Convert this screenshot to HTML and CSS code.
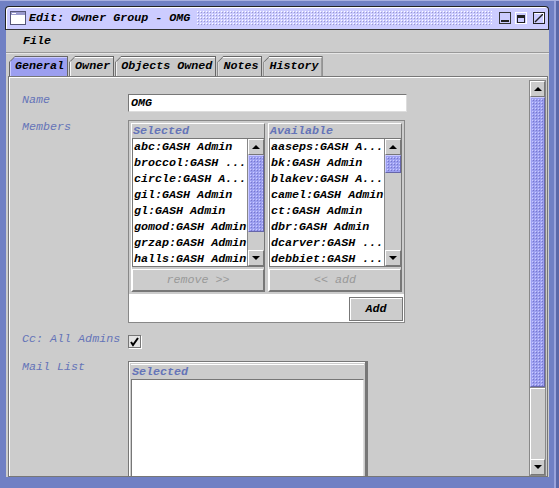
FILE: index.html
```html
<html>
<head>
  <title>Edit: Owner Group - OMG</title>
  <link rel="stylesheet" href="styles.css">
</head>
<body>
  <div class="window">
    <div class="titlebar">
      <span class="app-icon">
        <svg width="16" height="14" viewBox="0 0 16 14">
          <rect x="0.5" y="0.5" width="15" height="13" fill="#fff" stroke="#555577"/>
          <rect x="1" y="1" width="14" height="3" fill="#9999cc"/>
          <rect x="2" y="2" width="4" height="1" fill="#fff"/>
        </svg>
      </span>
      <span class="title">Edit: Owner Group - OMG</span>
      <span class="bumps"></span>
      <span class="tbtn">
        <svg width="12" height="12" viewBox="0 0 12 12">
          <rect x="0.5" y="0.5" width="11" height="11" fill="#ccccff" stroke="#fff"/>
          <rect x="0" y="0" width="11" height="11" fill="none" stroke="#333" stroke-width="1" transform="translate(0.5 0.5)"/>
          <rect x="2" y="8" width="8" height="2" fill="#222"/>
        </svg>
      </span>
      <span class="tbtn">
        <svg width="12" height="12" viewBox="0 0 12 12">
          <rect x="0.5" y="0.5" width="11" height="11" fill="#ccccff" stroke="#fff"/>
          <rect x="2.5" y="3.5" width="7" height="7" fill="#ccccff" stroke="#222"/>
          <rect x="3" y="4" width="6" height="2" fill="#222"/>
        </svg>
      </span>
      <span class="tbtn">
        <svg width="12" height="12" viewBox="0 0 12 12">
          <rect x="0.5" y="0.5" width="11" height="11" fill="#ccccff" stroke="#222"/>
          <path d="M2 10 L10 2" stroke="#222" stroke-width="1.5"/>
          <path d="M1.5 1.5 H10.5 V10.5" fill="none" stroke="#fff"/>
        </svg>
      </span>
    </div>

    <div class="frame-body">
      <div class="menubar"><span class="menu">File</span></div>

      <div class="tabs">
        <div class="tab selected"><span>General</span></div>
        <div class="tab"><span>Owner</span></div>
        <div class="tab"><span>Objects Owned</span></div>
        <div class="tab"><span>Notes</span></div>
        <div class="tab"><span>History</span></div>
      </div>

      <div class="panel">
        <div class="form">
          <div class="row row-name">
            <div class="lbl">Name</div>
            <div class="textfield">OMG</div>
          </div>

          <div class="row row-members">
            <div class="lbl">Members</div>
            <div class="members">
              <div class="cols">
                <div class="col">
                  <div class="col-head">Selected</div>
                  <div class="list">
                    <ul class="items">
                      <li>abc:GASH Admin</li>
                      <li>broccol:GASH ...</li>
                      <li>circle:GASH A...</li>
                      <li>gil:GASH Admin</li>
                      <li>gl:GASH Admin</li>
                      <li>gomod:GASH Admin</li>
                      <li>grzap:GASH Admin</li>
                      <li>halls:GASH Admin</li>
                    </ul>
                    <div class="sb">
                      <div class="sb-btn up"></div>
                      <div class="sb-thumb thumb-long"></div>
                      <div class="sb-track"></div>
                      <div class="sb-btn down"></div>
                    </div>
                  </div>
                  <div class="btn disabled">remove &gt;&gt;</div>
                </div>
                <div class="col">
                  <div class="col-head">Available</div>
                  <div class="list">
                    <ul class="items">
                      <li>aaseps:GASH A...</li>
                      <li>bk:GASH Admin</li>
                      <li>blakev:GASH A...</li>
                      <li>camel:GASH Admin</li>
                      <li>ct:GASH Admin</li>
                      <li>dbr:GASH Admin</li>
                      <li>dcarver:GASH ...</li>
                      <li>debbiet:GASH ...</li>
                    </ul>
                    <div class="sb">
                      <div class="sb-btn up"></div>
                      <div class="sb-thumb thumb-short"></div>
                      <div class="sb-track"></div>
                      <div class="sb-btn down"></div>
                    </div>
                  </div>
                  <div class="btn disabled">&lt;&lt; add</div>
                </div>
              </div>
              <div class="adder">
                <div class="btn add">Add</div>
              </div>
            </div>
          </div>

          <div class="row row-cc">
            <div class="lbl">Cc: All Admins</div>
            <div class="check">
              <svg width="11" height="11" viewBox="0 0 11 11">
                <path d="M2 6 L4 9 L9 2" fill="none" stroke="#000" stroke-width="2"/>
              </svg>
            </div>
          </div>

          <div class="row row-mail">
            <div class="lbl">Mail List</div>
            <div class="mail">
              <div class="col-head">Selected</div>
              <div class="mail-list"></div>
            </div>
          </div>
        </div>

        <div class="vscroll">
          <div class="sb-btn up"></div>
          <div class="sb-thumb main-thumb"></div>
          <div class="sb-track"></div>
          <div class="sb-btn down"></div>
        </div>
      </div>
    </div>
  </div>
</body>
</html>
```

FILE: styles.css
```css
body {
  margin: 0;
  font: italic 11.7px "Liberation Mono", "DejaVu Sans Mono", monospace;
  background: #7080c4;
}
.window {
  width: 559px;
  height: 488px;
  box-sizing: border-box;
  padding: 6px 10px 11px 5px;
  display: flex;
  flex-direction: column;
  background: #7080c4;
  box-shadow: inset 0 1px 0 #a8b0e0, inset -3px 0 0 #5a68a8, inset -5px 0 0 #9aa4dc;
}

/* title bar */
.titlebar {
  height: 24px;
  box-sizing: border-box;
  display: flex;
  align-items: center;
  background: #ccccff;
  border: 1px solid #222;
  border-bottom-color: #333;
  border-radius: 4px 4px 0 0;
  box-shadow: inset 1px 1px 0 #fff;
  padding: 0 3px 0 4px;
}
.app-icon {
  display: flex;
  margin-right: 3px;
}
.title {
  font-weight: bold;
  padding-right: 6px;
}
.bumps {
  flex: 1;
  align-self: stretch;
  margin: 3px 3px 3px 0;
  background:
    radial-gradient(circle, #ffffff 0.6px, transparent 0.9px) 0 0 / 3px 3px,
    radial-gradient(circle, #9999cc 0.6px, transparent 0.9px) 1px 1px / 3px 3px,
    #ccccff;
}
.tbtn {
  display: flex;
  margin-left: 4px;
}
.tbtn:last-child {
  margin-left: 6px;
}

/* gray body */
.frame-body {
  flex: 1;
  background: #cccccc;
  display: flex;
  flex-direction: column;
  overflow: hidden;
  border-left: 1px solid #7080c4;
}
.menubar {
  height: 22px;
  border-bottom: 1px solid #999;
  box-shadow: 0 1px 0 #e6e6e6;
  display: flex;
  align-items: center;
  padding-left: 17px;
}
.menu {
  font-weight: bold;
}
.tabs {
  display: flex;
  padding: 3px 0 0 3px;
  height: 20px;
}
.tab {
  background: #666;
  padding: 1px 1px 0 1px;
  margin-right: 1px;
  clip-path: polygon(6px 0, 100% 0, 100% 100%, 0 100%, 0 6px);
  display: flex;
}
.tab span {
  display: block;
  font-weight: bold;
  color: #000;
  line-height: 18px;
  padding: 0 3px 0 5px;
  background: #c8c8c8;
  box-shadow: inset 1px 1px 0 #fff;
  clip-path: polygon(5px 0, 100% 0, 100% 100%, 0 100%, 0 5px);
}
.tab.selected span {
  background: #9c9ff0;
  box-shadow: inset 1px 1px 0 #ccccff;
}

/* main panel */
.panel {
  flex: 1;
  margin: 0 1px 0 2px;
  border: 1px solid #777;
  box-shadow: inset 1px 1px 0 #fff;
  display: flex;
  overflow: hidden;
  min-height: 0;
}
.form {
  flex: 1;
  padding: 17px 0 0 13px;
}
.row {
  display: flex;
}
.lbl {
  width: 106px;
  flex: none;
  color: #6574b8;
  line-height: 13px;
}
.row-members {
  margin-top: 8px;
}
.row-members .lbl {
  padding-top: 1px;
}
.row-cc {
  margin-top: 10px;
}
.row-mail {
  margin-top: 13px;
}

.textfield {
  width: 279px;
  height: 18px;
  box-sizing: border-box;
  background: #fff;
  border: 1px solid #777;
  border-right-color: #ddd;
  border-bottom-color: #ddd;
  font-weight: bold;
  line-height: 16px;
  padding-left: 2px;
}

/* member chooser */
.members {
  width: 277px;
  height: 203px;
  box-sizing: border-box;
  border: 1px solid #888;
  background: #fff;
  display: flex;
  flex-direction: column;
}
.cols {
  display: flex;
  gap: 3px;
  padding: 2px;
  background: #cccccc;
}
.col {
  width: 134px;
  box-sizing: border-box;
  border: 1px solid;
  border-color: #fff #777 #777 #fff;
  display: flex;
  flex-direction: column;
}
.col-head {
  height: 14px;
  line-height: 14px;
  font-weight: bold;
  color: #6574b8;
  padding-left: 1px;
  background: #cccccc;
}
.list {
  height: 129px;
  box-sizing: border-box;
  border: 1px solid #777;
  border-right: none;
  background: #fff;
  display: flex;
}
.items {
  flex: 1;
  margin: 0;
  padding: 0 0 0 1px;
  list-style: none;
  overflow: hidden;
}
.items li {
  font-weight: bold;
  line-height: 16px;
  white-space: nowrap;
}
.sb {
  width: 16px;
  flex: none;
  display: flex;
  flex-direction: column;
  border-left: 1px solid #888;
  background: #cccccc;
}
.sb-btn {
  height: 16px;
  flex: none;
  box-sizing: border-box;
  border: 1px solid;
  border-color: #fff #777 #777 #fff;
  background: #cccccc;
  position: relative;
}
.sb-btn::after {
  content: "";
  position: absolute;
  left: 50%;
  top: 50%;
  margin: -2px 0 0 -4px;
  border-left: 4px solid transparent;
  border-right: 4px solid transparent;
}
.sb-btn.up::after {
  border-bottom: 4px solid #000;
}
.sb-btn.down::after {
  border-top: 4px solid #000;
}
.sb-thumb {
  flex: none;
  box-sizing: border-box;
  border: 1px solid #6666aa;
  border-top-color: #ccccff;
  border-left-color: #ccccff;
  background:
    radial-gradient(circle, #ccccff 0.6px, transparent 0.9px) 0 0 / 3px 3px,
    radial-gradient(circle, #7777cc 0.6px, transparent 0.9px) 1px 1px / 3px 3px,
    #9c9ff0;
}
.thumb-long {
  height: 77px;
}
.thumb-short {
  height: 18px;
}
.sb-track {
  flex: 1;
  background: #cccccc;
}
.btn {
  box-sizing: border-box;
  border: 1px solid;
  border-color: #fff #777 #777 #fff;
  background: #cccccc;
  text-align: center;
}
.btn.disabled {
  margin-top: 2px;
  height: 22px;
  line-height: 20px;
  color: #999;
}
.adder {
  flex: 1;
  display: flex;
  justify-content: flex-end;
  align-items: flex-start;
  padding: 3px 1px 0 0;
}
.btn.add {
  width: 54px;
  height: 24px;
  line-height: 22px;
  font-weight: bold;
  border-color: #fff #666 #666 #fff;
  outline: 1px solid #777;
  outline-offset: -1px;
  box-shadow: inset 1px 1px 0 #fff;
}

.check {
  width: 13px;
  height: 13px;
  box-sizing: border-box;
  border: 1px solid #777;
  background: #e4e4e4;
  box-shadow: 1px 1px 0 #fff;
  display: flex;
  align-items: center;
  justify-content: center;
  margin-top: 2px;
}

.mail {
  width: 240px;
  height: 140px;
  flex: none;
  box-sizing: border-box;
  border: 1px solid #777;
  border-right-width: 3px;
  box-shadow: inset 1px 1px 0 #fff;
  padding: 2px 1px 0 2px;
  display: flex;
  flex-direction: column;
}
.mail .col-head {
  border-top: 1px solid #fff;
}
.mail-list {
  flex: 1;
  background: #fff;
  border: 1px solid #777;
  border-right-color: #ddd;
}

/* main scrollbar */
.vscroll {
  width: 15px;
  flex: none;
  margin: 3px 1px 0 0;
  display: flex;
  flex-direction: column;
  border: 1px solid #888;
  background: #cccccc;
}
.main-thumb {
  height: 290px;
}
.vscroll .sb-track {
  border-top: 1px solid #888;
  box-shadow: inset 1px 1px 0 #fff;
}
```
